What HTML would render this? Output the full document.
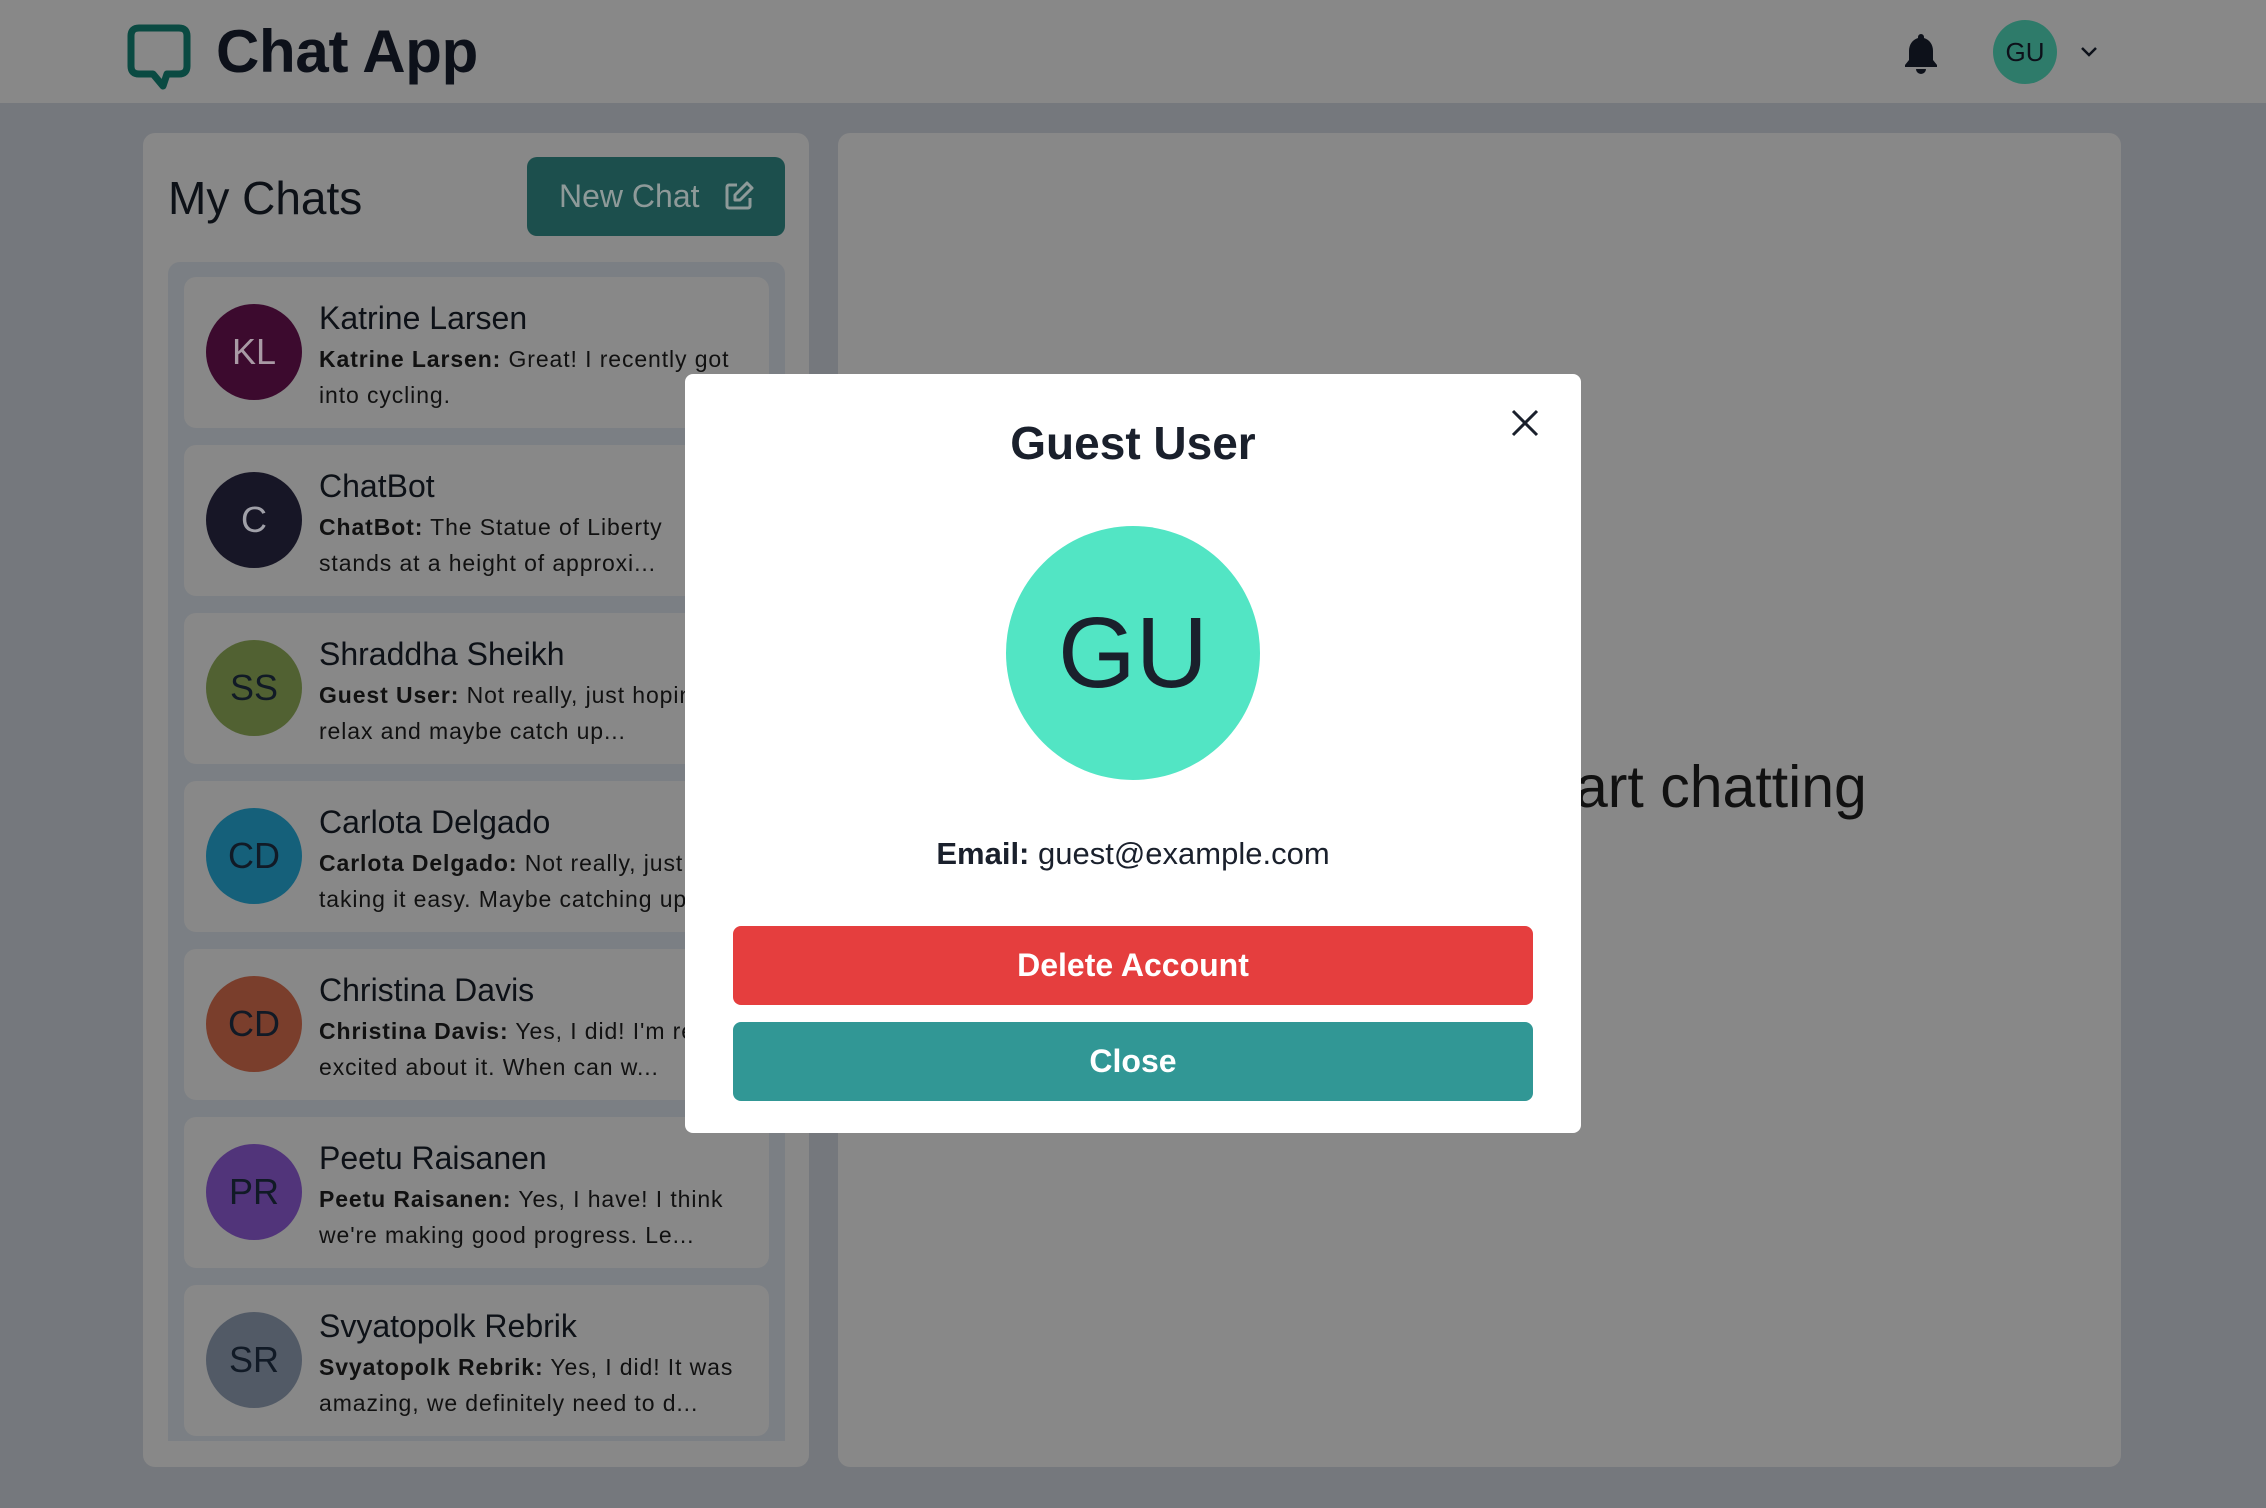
<!DOCTYPE html>
<html><head><meta charset="utf-8"><style>
*{box-sizing:border-box;margin:0;padding:0}
body{width:2266px;height:1508px;overflow:hidden;background:#75787d;font-family:"Liberation Sans",Arial,sans-serif;position:relative;color:#0d1117}
.hdr{position:absolute;left:0;top:0;width:2266px;height:103px;background:#888888}
.logo{position:absolute;left:216px;top:17px;font-size:60px;font-weight:700;color:#0d111a;letter-spacing:-0.3px}
.lp{position:absolute;left:143px;top:133px;width:666px;height:1334px;background:#888;border-radius:12px}
.rp{position:absolute;left:838px;top:133px;width:1283px;height:1334px;background:#888;border-radius:12px;overflow:hidden}
.mc{position:absolute;left:168px;top:171px;font-size:46px;color:#0d1117}
.nc{position:absolute;left:527px;top:157px;width:258px;height:79px;background:#1c4f4d;border-radius:10px;color:#8e9a99;font-size:32px;line-height:79px;padding-left:32px}
.list{position:absolute;left:168px;top:262px;width:617px;height:1179px;background:#7b7f84;border-radius:12px 12px 0 0}
.it{position:absolute;left:184px;width:585px;height:151px;background:#888;border-radius:12px}
.av{position:absolute;left:22px;top:27px;width:96px;height:96px;border-radius:50%;text-align:center;line-height:96px;font-size:36px}
.nm{position:absolute;left:135px;top:23px;font-size:32px;color:#0d1117;white-space:nowrap}
.ms{position:absolute;left:135px;top:64px;width:415px;font-size:23px;line-height:36px;color:#111;letter-spacing:0.9px}
.ms b{font-weight:700}
.sel{position:absolute;left:268px;top:620px;font-size:59px;color:#111}
.modal{position:absolute;left:685px;top:374px;width:896px;height:759px;background:#fff;border-radius:8px}
.tt{position:absolute;left:0;width:100%;top:42px;text-align:center;font-size:46px;font-weight:700;color:#1a202c}
.big{position:absolute;left:321px;top:152px;width:254px;height:254px;border-radius:50%;background:#52e5c4;text-align:center;line-height:254px;font-size:100px;color:#1a202c}
.em{position:absolute;left:0;width:100%;top:462px;text-align:center;font-size:31px;color:#1a202c}
.btn{position:absolute;left:48px;width:800px;height:79px;border-radius:8px;color:#fff;font-size:32px;font-weight:700;text-align:center;line-height:79px}
</style></head><body>
<div class="hdr">
<svg style="position:absolute;left:127px;top:24px" width="64" height="66" viewBox="0 0 64 66"><path d="M12 4H52Q60 4 60 12V42Q60 50 52 50H40L36 62L26 50H12Q4 50 4 42V12Q4 4 12 4Z" fill="none" stroke="#0a4a42" stroke-width="7" stroke-linejoin="round"/></svg>
<div class="logo">Chat App</div>
<svg style="position:absolute;left:1903px;top:32px" width="36" height="42" viewBox="0 0 36 42"><path d="M18 2a3 3 0 0 1 3 3v1c6 2 9 7 9 13v9l4 5v2H2v-2l4-5v-9c0-6 3-11 9-13V5a3 3 0 0 1 3-3z" fill="#0d111a"/><path d="M13 37h10a5 5 0 0 1-10 0z" fill="#0d111a"/></svg>
<div style="position:absolute;left:1993px;top:20px;width:64px;height:64px;border-radius:50%;background:#2e7b6a;text-align:center;line-height:64px;font-size:26px;color:#0d111a">GU</div>
<svg style="position:absolute;left:2080px;top:46px" width="18" height="12" viewBox="0 0 18 12"><path d="M2 2l7 7 7-7" fill="none" stroke="#0d111a" stroke-width="2.5"/></svg>
</div>
<div class="lp"></div>
<div class="mc">My Chats</div>
<div class="nc">New Chat<svg style="position:absolute;left:196px;top:23px" width="32" height="32" viewBox="0 0 32 32"><path d="M14 5H6a2 2 0 0 0-2 2v19a2 2 0 0 0 2 2h19a2 2 0 0 0 2-2v-8" fill="none" stroke="#8e9a99" stroke-width="3"/><path d="M24 3l5 5-12 12h-5v-5z" fill="none" stroke="#8e9a99" stroke-width="3" stroke-linejoin="round"/></svg></div>
<div class="list"></div>

<div class="it" style="top:277px"><div class="av" style="background:#3c0a2e;color:#a99aa5">KL</div><div class="nm">Katrine Larsen</div><div class="ms"><b>Katrine Larsen:</b> Great! I recently got into cycling.</div></div>
<div class="it" style="top:445px"><div class="av" style="background:#171626;color:#a0a0a8">C</div><div class="nm">ChatBot</div><div class="ms"><b>ChatBot:</b> The Statue of Liberty<br>stands at a height of approxi...</div></div>
<div class="it" style="top:613px"><div class="av" style="background:#516132;color:#111a26">SS</div><div class="nm">Shraddha Sheikh</div><div class="ms" style="width:560px"><b>Guest User:</b> Not really, just hoping to<br>relax and maybe catch up...</div></div>
<div class="it" style="top:781px"><div class="av" style="background:#15607a;color:#111a26">CD</div><div class="nm">Carlota Delgado</div><div class="ms"><b>Carlota Delgado:</b> Not really, just taking it easy. Maybe catching up...</div></div>
<div class="it" style="top:949px"><div class="av" style="background:#7a3e2c;color:#111a26">CD</div><div class="nm">Christina Davis</div><div class="ms"><b>Christina Davis:</b> Yes, I did! I'm really excited about it. When can w...</div></div>
<div class="it" style="top:1117px"><div class="av" style="background:#51347a;color:#111a26">PR</div><div class="nm">Peetu Raisanen</div><div class="ms"><b>Peetu Raisanen:</b> Yes, I have! I think we're making good progress. Le...</div></div>
<div class="it" style="top:1285px"><div class="av" style="background:#525a66;color:#111a26">SR</div><div class="nm">Svyatopolk Rebrik</div><div class="ms"><b>Svyatopolk Rebrik:</b> Yes, I did! It was amazing, we definitely need to d...</div></div>

<div class="rp"><div class="sel">Select a chat to start chatting</div></div>

<div class="modal">
<div class="tt">Guest User</div>
<svg style="position:absolute;left:826px;top:35px" width="28" height="28" viewBox="0 0 28 28"><path d="M2 2L26 26M26 2L2 26" stroke="#1a202c" stroke-width="3"/></svg>
<div class="big">GU</div>
<div class="em"><b>Email:</b> guest@example.com</div>
<div class="btn" style="top:552px;background:#e53e3e">Delete Account</div>
<div class="btn" style="top:648px;background:#319795">Close</div>
</div>
</body></html>
